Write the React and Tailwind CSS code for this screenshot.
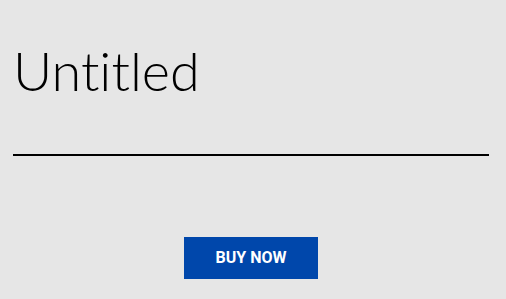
import React from "react";

export default function App() {
  return (
    <div className="w-[506px] h-[299px] bg-[#e6e6e6] overflow-hidden">
      <div className="pl-[13px] pr-[17px] pt-[36px]">
        <h1
          className="text-[54px] leading-[70px] font-light text-black [font-variant-ligatures:none]"
          style={{ fontFamily: "Lato, sans-serif" }}
        >
          Untitled
        </h1>
        <div className="mt-[48px] h-[2px] bg-black" />
        <div className="flex justify-center mt-[81px]">
          <button
            type="button"
            className="w-[134px] h-[42px] bg-[#0047ab] text-white text-[16px] font-bold"
            style={{ fontFamily: "Roboto, sans-serif" }}
          >
            BUY NOW
          </button>
        </div>
      </div>
    </div>
  );
}
